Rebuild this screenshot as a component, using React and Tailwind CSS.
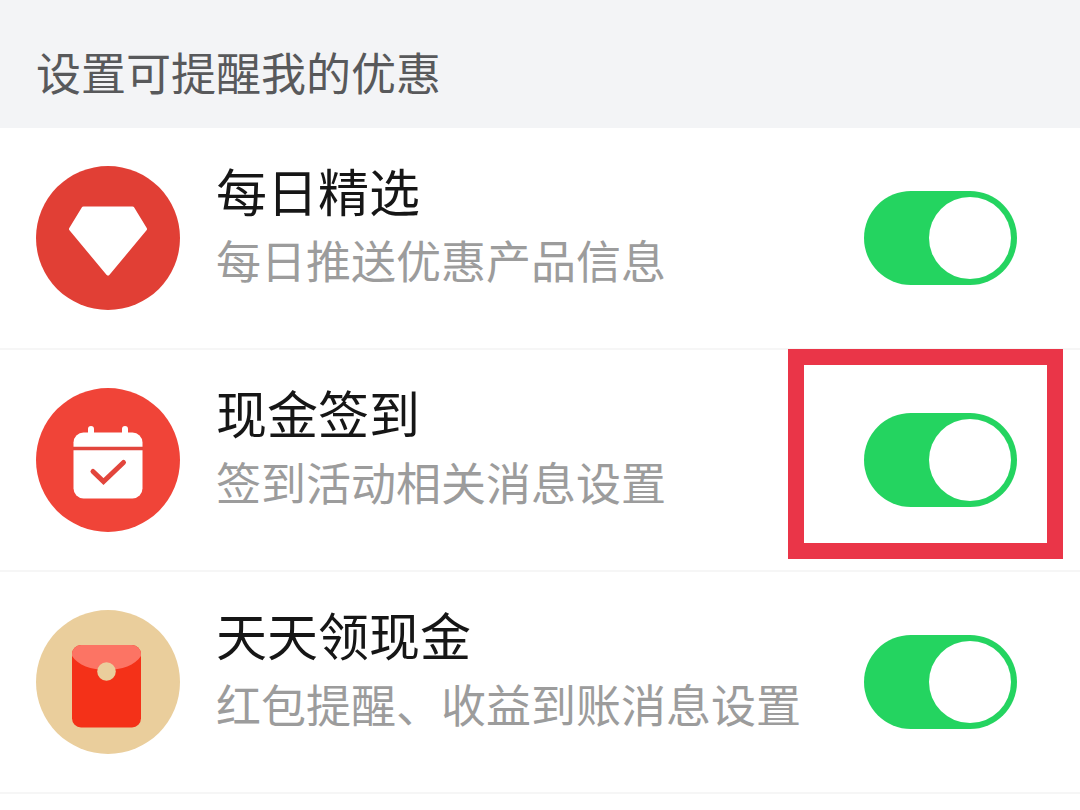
import React, { useState } from "react";

function DiamondIcon() {
  return (
    <svg viewBox="0 0 144 144" className="size-36 shrink-0" aria-hidden="true">
      <circle cx="72" cy="72" r="72" fill="#e13f35" />
      <path
        d="M47.5 42.5 H96.500 L109 63 L72 107.500 L35 63 Z"
        fill="#fff"
        stroke="#fff"
        strokeWidth="4"
        strokeLinejoin="round"
      />
    </svg>
  );
}

function CalendarIcon() {
  return (
    <svg viewBox="0 0 144 144" className="size-36 shrink-0" aria-hidden="true">
      <circle cx="72" cy="72" r="72" fill="#f04438" />
      <rect x="37.5" y="44.5" width="69" height="66" rx="10" fill="#fff" />
      <path d="M55 41 V48 M89 41 V48" stroke="#fff" strokeWidth="6" strokeLinecap="round" />
      <path d="M37 60.5 H107" stroke="#e2453c" strokeWidth="3.4" />
      <path
        d="M57 83.5 L67.5 93.500 L87.500 74.5"
        fill="none"
        stroke="#e2453c"
        strokeWidth="5"
        strokeLinecap="round"
      />
    </svg>
  );
}

function RedPacketIcon() {
  return (
    <svg viewBox="0 0 144 144" className="size-36 shrink-0" aria-hidden="true">
      <circle cx="72" cy="72" r="72" fill="#eace9c" />
      <rect x="36" y="35" width="69" height="82.5" rx="9" fill="#f43118" />
      <path
        d="M45 35 H96 A9 9 0 0 1 105 44 V46 C99 55 86 60 70.5 60 C55 60 42 55 36 46 V44 A9 9 0 0 1 45 35 Z"
        fill="#fc7464"
      />
      <circle cx="70.5" cy="61.5" r="9.3" fill="#eace9c" />
    </svg>
  );
}

const items = [
  { id: "daily", title: "每日精选", detail: "每日推送优惠产品信息", Icon: DiamondIcon },
  { id: "signin", title: "现金签到", detail: "签到活动相关消息设置", Icon: CalendarIcon, marked: true },
  { id: "cash", title: "天天领现金", detail: "红包提醒、收益到账消息设置", Icon: RedPacketIcon },
];

function Toggle({ id, describedBy }) {
  const [on, setOn] = useState(true);
  return (
    <input
      id={id}
      type="checkbox"
      role="switch"
      aria-describedby={describedBy}
      checked={on}
      onChange={(e) => setOn(e.target.checked)}
      className="block h-[94px] w-[153px] cursor-pointer appearance-none rounded-full bg-[#ccc] p-[6px] before:block before:size-[82px] before:rounded-full before:bg-white checked:bg-[#24d460] checked:before:ml-auto"
    />
  );
}

function SettingRow({ id, title, detail, Icon, marked }) {
  return (
    <li className="flex items-center border-b-2 border-[#f6f6f6] pr-[63px] pl-9">
      <Icon />
      <div className="ml-9 min-w-0 flex-1 pt-7 pb-[52px]">
        <label htmlFor={id} className="block text-[51px] leading-[68px] text-[#161616]">
          {title}
        </label>
        <p id={`${id}-detail`} className="text-[45px] leading-[72px] text-[#9c9c9c]">
          {detail}
        </p>
      </div>
      <div className="relative shrink-0">
        <Toggle id={id} describedBy={`${id}-detail`} />
        {marked && (
          <span className="pointer-events-none absolute -top-16 -right-[46px] -bottom-[52px] -left-[76px] border-[16px] border-[#ea3548]" />
        )}
      </div>
    </li>
  );
}

export default function App() {
  return (
    <main
      lang="zh-CN"
      className="min-h-screen bg-white font-['Noto_Sans_CJK_SC',sans-serif] whitespace-nowrap"
    >
      <h1 className="bg-[#f3f4f6] px-9 pt-[38px] pb-[22px] text-[45px] leading-[68px] font-normal text-[#58595b]">
        设置可提醒我的优惠
      </h1>
      <ul>
        {items.map((item) => (
          <SettingRow key={item.id} {...item} />
        ))}
      </ul>
    </main>
  );
}
